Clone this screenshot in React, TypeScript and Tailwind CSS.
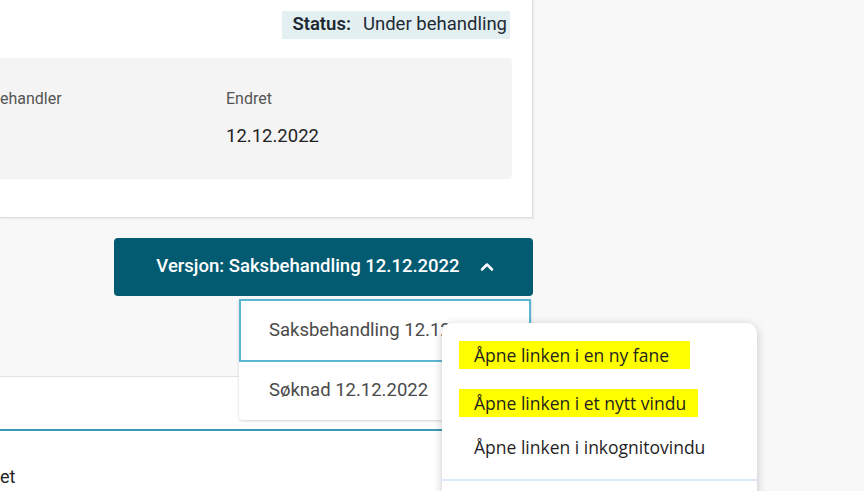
import { ChevronUp } from "lucide-react";

const roboto = "font-['Roboto','Liberation_Sans',sans-serif]";

export default function App() {
    return (
        <div className={`relative w-[864px] h-[491px] overflow-hidden bg-[#f8f8f8] ${roboto}`}>
            <div className="w-[533px]">
                {/* sak-kort */}
                <div className="h-[218px] bg-white border-r border-b border-[#dcdcdc] shadow-[1px_1px_2px_rgba(0,0,0,0.06)] pt-[11px]">
                    <div className="flex justify-end pr-[22px]">
                        <div className="flex items-center h-[28px] pl-[10px] pr-[3px] bg-[#e4eff2] text-[18.5px] text-[#1d2a33]">
                            <span className="font-semibold">Status:</span>
                            <span className="ml-[12px]">Under behandling</span>
                        </div>
                    </div>
                    <div className="mt-[19px] mr-[20px] h-[121px] bg-[#f4f4f4] rounded-r-[4px] flex pt-[29px]">
                        <div className="w-[226px]">
                            <div className="text-[16px] text-[#555]">ehandler</div>
                        </div>
                        <div>
                            <div className="text-[16px] text-[#555]">Endret</div>
                            <div className="mt-[12px] text-[18.5px] text-[#222]">12.12.2022</div>
                        </div>
                    </div>
                </div>

                {/* versjonsvelger */}
                <div className="h-[159px] border-b border-[#e2e2e2] pt-[20px] flex justify-end">
                    <button className="w-[419px] h-[58px] rounded-[4px] bg-[#035b72] text-white text-[18.5px] font-medium flex items-center justify-center gap-[17px] pl-[6px]">
                        <span>Versjon: Saksbehandling 12.12.2022</span>
                        <ChevronUp size={20} strokeWidth={3} />
                    </button>
                </div>

                {/* nedre kort */}
                <div className="h-[120px] bg-white pt-[52px]">
                    <div className="h-[2px] bg-[#3a9ab6]" />
                    <div className="mt-[34px] text-[18px] leading-[24px] text-[#222]">et</div>
                </div>
            </div>

            {/* nedtrekksliste */}
            <div className="absolute left-[239px] top-[299px] w-[292px] bg-white rounded-b-[4px] shadow-[0_1px_3px_rgba(0,0,0,0.18)] text-[18.5px] text-[#4a4a4a]">
                <div className="h-[63px] border-2 border-[#5ab7d3] flex items-center pl-[28px] whitespace-nowrap">Saksbehandling 12.12.2022</div>
                <div className="h-[58px] flex items-center pl-[30px]">Søknad 12.12.2022</div>
            </div>

            {/* kontekstmeny */}
            <div className="absolute left-[442px] top-[323px] w-[315px] h-[200px] bg-white rounded-[10px] shadow-[0_2px_10px_rgba(0,0,0,0.22)] pt-[18px] font-['Open_Sans','Noto_Sans',sans-serif] text-[17.5px] text-[#1f1f1f]">
                <div className="ml-[17px] w-[231px] h-[28px] bg-[#ffff00] flex items-center pl-[15px]">Åpne linken i en ny fane</div>
                <div className="ml-[17px] mt-[20px] w-[239px] h-[28px] bg-[#ffff00] flex items-center pl-[15px]">Åpne linken i et nytt vindu</div>
                <div className="mt-[16px] h-[28px] flex items-center pl-[32px]">Åpne linken i inkognitovindu</div>
                <div className="mt-[18px] h-[2px] bg-[#dce7f8]" />
            </div>
        </div>
    );
}
